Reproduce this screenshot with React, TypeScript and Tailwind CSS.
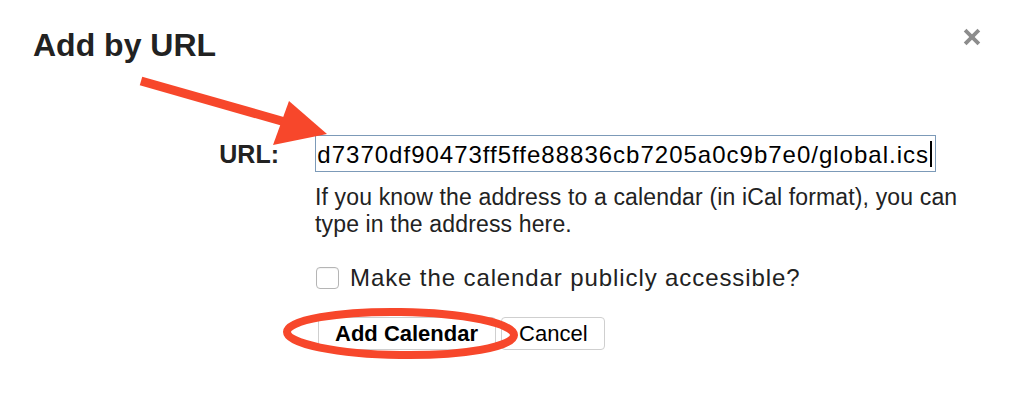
import { X } from 'lucide-react';

const urlValue = 'webcal://p01-calendarws.icloud.com/ca/subscribe/1/3a96d7370df90473ff5ffe88836cb7205a0c9b7e0/global.ics';

export default function App() {
  return (
    <div className="relative w-[1014px] h-[400px] overflow-hidden bg-white text-[#222] font-['Liberation_Sans',Arial,sans-serif]">
      {/* Header */}
      <div className="flex items-start justify-between pl-[33px] pr-[31px] pt-[27px]">
        <h1 className="text-[32px] leading-[36px] font-bold">Add by URL</h1>
        <X className="mt-[-1px] w-[22px] h-[22px] text-[#8c8c8c]" strokeWidth={4.2} strokeLinecap="square" />
      </div>

      {/* Form */}
      <div className="grid grid-cols-[279px_660px] gap-x-[36px] mt-[72px]">
        <label className="text-right text-[25px] font-bold leading-[37px] pt-[1px]">URL:</label>
        <div>
          <div className="flex justify-end items-center h-[37px] w-[621px] border border-[#7c9ab8] overflow-hidden whitespace-nowrap pr-[3px]">
            <span className="text-[24px] tracking-[1px] text-black leading-[26px] pt-[3px]">{urlValue}</span>
            <span className="ml-[1px] w-[2px] h-[26px] bg-black shrink-0" />
          </div>
          <p className="w-[655px] mt-[12px] text-[23px] tracking-[0.15px] leading-[27px] text-[#222]">
            If you know the address to a calendar (in iCal format), you can type in the address here.
          </p>
          <label className="flex items-center gap-[11px] mt-[27px] ml-[1px]">
            <span className="w-[23px] h-[22px] rounded-[4px] border border-[#b5b5b5] bg-white shadow-[inset_0_1px_1px_rgba(0,0,0,0.05)]" />
            <span className="text-[24px] tracking-[0.9px] leading-[26px] text-[#222]">Make the calendar publicly accessible?</span>
          </label>
          <div className="flex gap-[5px] mt-[26px] ml-[3px]">
            <button className="h-[33px] pl-[16px] pr-[17px] rounded-[4px] border border-[#cfcfcf] bg-white text-[22px] font-bold text-black leading-none">
              Add Calendar
            </button>
            <button className="h-[33px] pl-[17px] pr-[16px] rounded-[4px] border border-[#cfcfcf] bg-white text-[22px] text-black leading-none">
              Cancel
            </button>
          </div>
        </div>
      </div>

      {/* Annotation overlay */}
      <svg className="absolute inset-0 pointer-events-none" width="1014" height="400" viewBox="0 0 1014 400">
        <line x1="141" y1="81" x2="292" y2="124" stroke="#f7472b" strokeWidth="9" />
        <polygon points="289,101 327,134 273,145" fill="#f7472b" />
        <ellipse cx="400.5" cy="333.5" rx="113.5" ry="21.5" fill="none" stroke="#f7472b" strokeWidth="8" transform="rotate(0.8 400.5 333.5)" />
      </svg>
    </div>
  );
}
